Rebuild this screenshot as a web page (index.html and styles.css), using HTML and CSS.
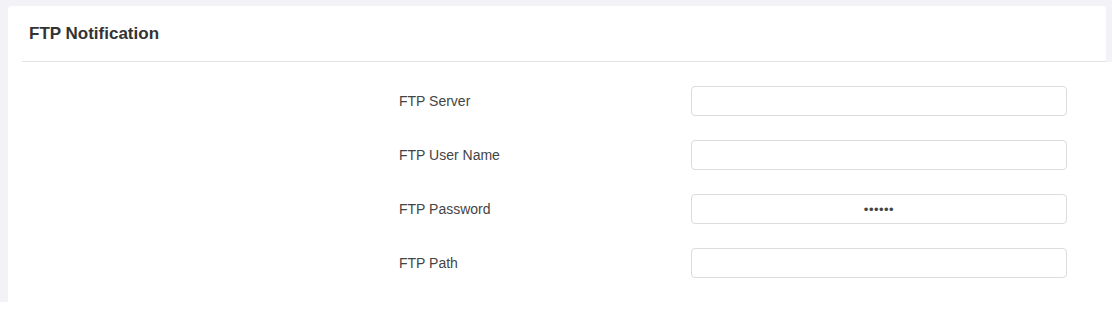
FILE: index.html
```html
<!DOCTYPE html>
<html lang="en">
<head>
    <meta charset="UTF-8">
    <title>FTP Notification</title>
    <link rel="stylesheet" href="styles.css">
</head>
<body>
    <div class="page">
        <div class="card">
            <div class="card-header">FTP Notification</div>
            <div class="card-body">
                <div class="form-row">
                    <label class="form-label">FTP Server</label>
                    <input class="form-input" type="text" value="">
                </div>
                <div class="form-row">
                    <label class="form-label">FTP User Name</label>
                    <input class="form-input" type="text" value="">
                </div>
                <div class="form-row">
                    <label class="form-label">FTP Password</label>
                    <input class="form-input password" type="password" value="123456">
                </div>
                <div class="form-row">
                    <label class="form-label">FTP Path</label>
                    <input class="form-input" type="text" value="">
                </div>
            </div>
        </div>
    </div>
</body>
</html>
```

FILE: styles.css
```css
body {
    margin: 0;
    background: #ffffff;
    font-family: "Liberation Sans", Arial, sans-serif;
    color: #333;
}

.page {
    background: #f3f3f7;
    padding: 6px 6px 0 8px;
    height: 296px;
}

.card {
    background: #ffffff;
    border-radius: 4px 4px 0 0;
    height: 100%;
}

.card-header {
    margin-left: 14px;
    padding-left: 7px;
    height: 55px;
    line-height: 55px;
    font-size: 17px;
    font-weight: bold;
    color: #333;
    border-bottom: 1px solid #e2e2e2;
}

.card-body {
    margin-right: -6px;
    height: 240px;
    background: #ffffff;
    padding-top: 24px;
    padding-left: 391px;
    display: flex;
    flex-direction: column;
    gap: 24px;
}

.form-row {
    display: flex;
    align-items: center;
}

.form-label {
    width: 292px;
    font-size: 14px;
    color: #444;
}

.form-input {
    box-sizing: border-box;
    width: 376px;
    height: 30px;
    border: 1px solid #dcdcdc;
    border-radius: 4px;
    padding: 0 10px;
    font-family: inherit;
    font-size: 13px;
    color: #555;
    outline: none;
    background: #fff;
}

.form-input.password {
    text-align: center;
    font-size: 13px;
    letter-spacing: 0.5px;
    color: #444;
}
```
